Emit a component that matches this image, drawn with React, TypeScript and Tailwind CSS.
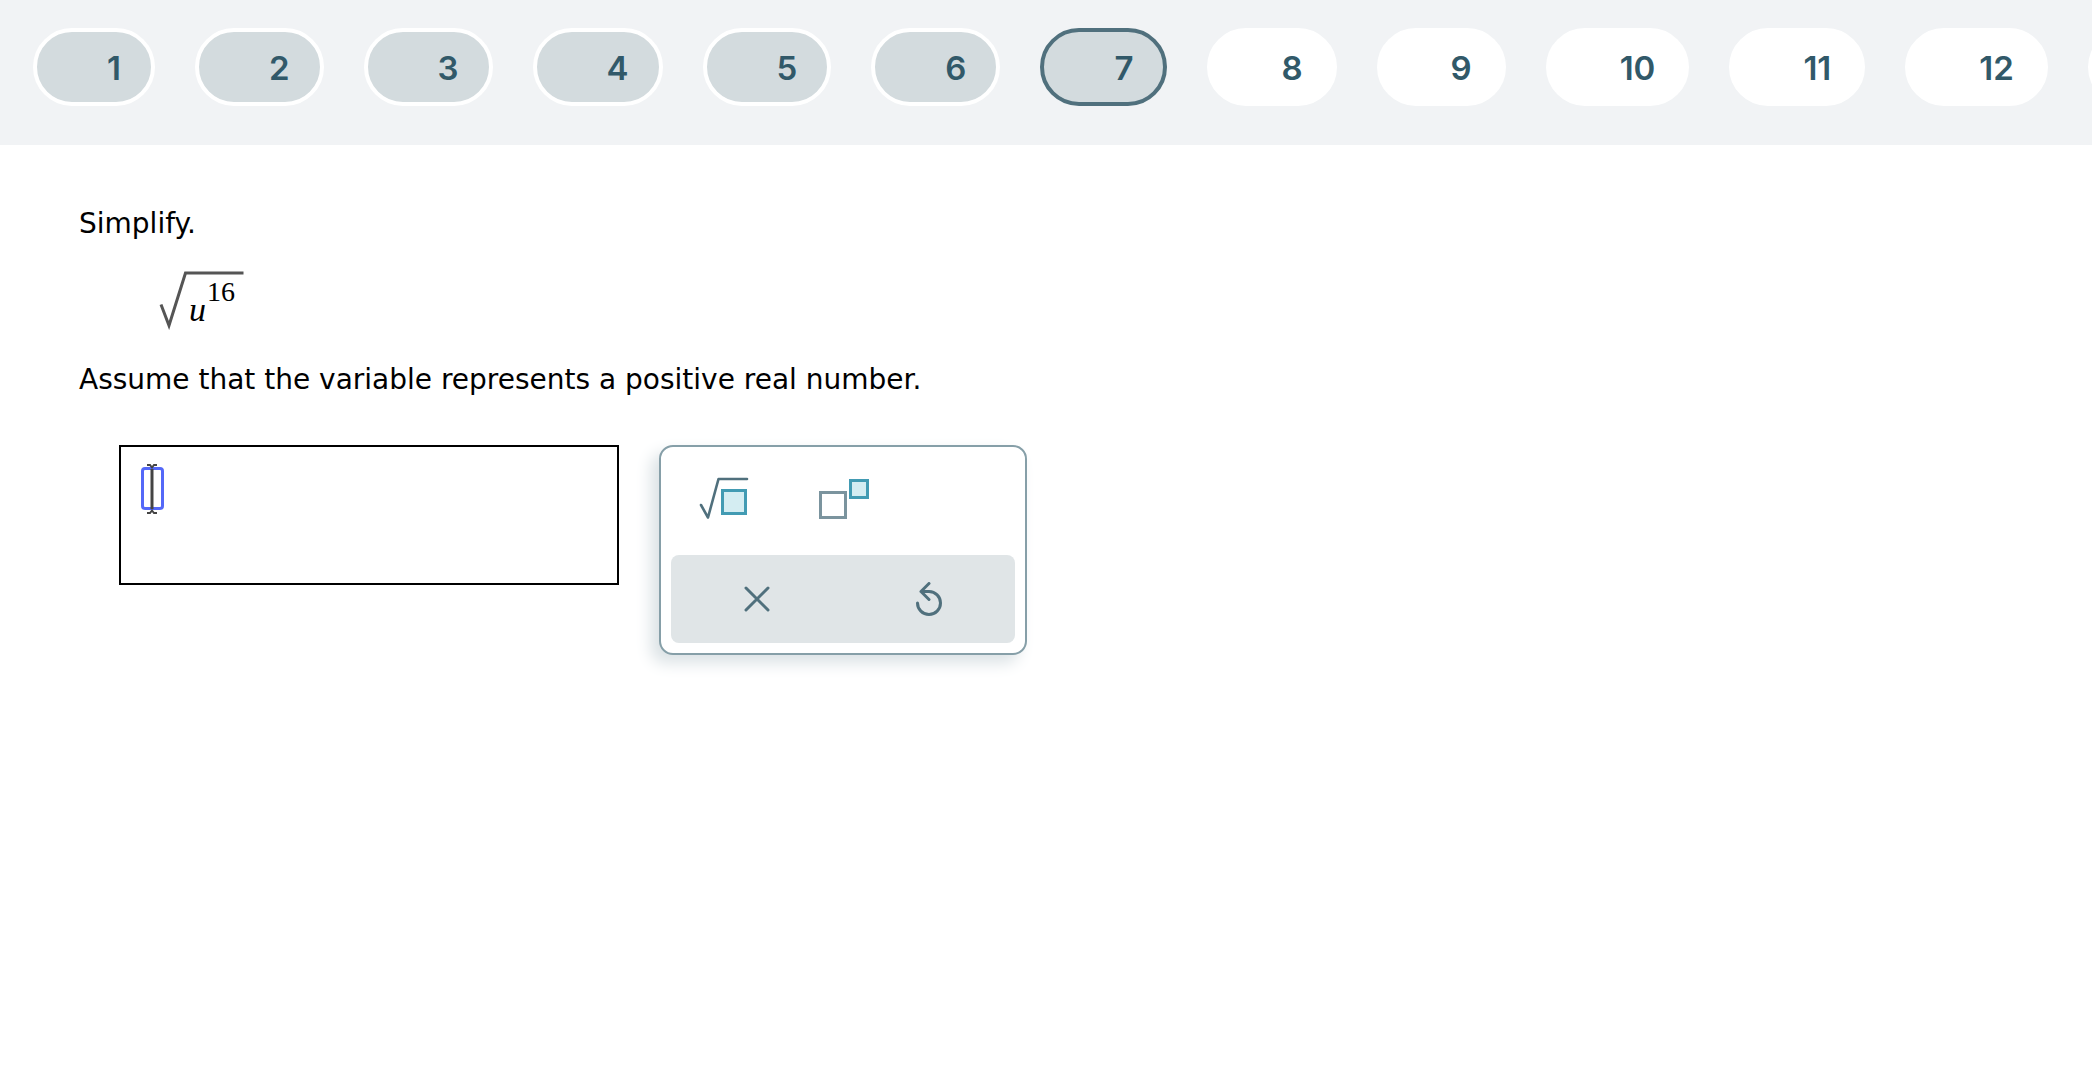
import { useState } from "react";

const questions = [
  { id: 1, answered: true },
  { id: 2, answered: true },
  { id: 3, answered: true },
  { id: 4, answered: true },
  { id: 5, answered: true },
  { id: 6, answered: true },
  { id: 7, answered: true },
  { id: 8, answered: false },
  { id: 9, answered: false },
  { id: 10, answered: false },
  { id: 11, answered: false },
  { id: 12, answered: false },
];

function pillColors(answered: boolean, active: boolean) {
  if (active) return "border-[#50707d] bg-[#d3dbde]";
  return answered ? "border-white bg-[#d3dbde]" : "border-white bg-white";
}

function QuestionNav({ current, onSelect }: { current: number; onSelect: (id: number) => void }) {
  return (
    <nav
      aria-label="Questions"
      className="flex h-[145px] items-start gap-10 overflow-hidden bg-[#f1f3f5] pl-[33px] pt-7"
    >
      {questions.map((q) => (
        <button
          key={q.id}
          type="button"
          onClick={() => onSelect(q.id)}
          aria-current={q.id === current ? "step" : undefined}
          className={`h-[78px] shrink-0 rounded-full border-4 pl-[70px] pr-[30px] pt-1 font-['Inter',sans-serif] text-[33px] font-semibold text-[#315969] ${pillColors(q.answered, q.id === current)}`}
        >
          {q.id}
        </button>
      ))}
      {/* more questions past the right edge */}
      <button type="button" aria-label="More" className="h-[78px] w-36 shrink-0 rounded-full bg-white" />
    </nav>
  );
}

function Expression() {
  return (
    <div
      role="math"
      aria-label="square root of u to the power 16"
      className="relative ml-20 mt-7 h-[60px] w-[86px] font-['Liberation_Serif',serif]"
    >
      <svg viewBox="0 0 86 60" className="h-full w-full" fill="none" stroke="#555" aria-hidden>
        <path d="M2 34.500 L10 55.500 L26.500 3 H84.500" strokeWidth="3" />
      </svg>
      <span className="absolute left-[30px] top-[20px] text-[34px] leading-[40px] italic">u</span>
      <sup className="absolute left-12 top-1.5 text-[28px] leading-8">16</sup>
    </div>
  );
}

function AnswerBox() {
  return (
    <div className="h-[140px] w-[500px] border-2 border-black p-5">
      <div className="relative h-[43px] w-[23px]">
        <input
          type="text"
          aria-label="Answer"
          className="block h-full w-full rounded-sm border-3 border-[#5468f8] outline-none"
        />
        <svg
          viewBox="0 0 12 52"
          className="pointer-events-none absolute -top-1 left-[5px] h-[52px] w-3"
          fill="none"
          stroke="#444"
          aria-hidden
        >
          <path d="M6 6 V46" strokeWidth="3" />
          <path d="M1 2 H4 L6 4.500 L8 2 H11 M1 50 H4 L6 47.500 L8 50 H11" strokeWidth="2" />
        </svg>
      </div>
    </div>
  );
}

function Palette() {
  return (
    <div className="w-[368px] rounded-[14px] border-2 border-[#869fa8] bg-white p-2.5 shadow-[-8px_8px_16px_#dbe2e5]">
      <div className="flex h-[98px] gap-[70px] pl-7 pt-5">
        <button type="button" aria-label="Square root" className="h-11 w-[50px]">
          <svg viewBox="0 0 50 44" className="h-full w-full" fill="none" aria-hidden>
            <path
              d="M2 28 L9 40.500 L19.500 2 H48"
              stroke="#50707d"
              strokeWidth="2.600"
              strokeLinecap="round"
              strokeLinejoin="round"
            />
            <rect x="23.500" y="13.500" width="23" height="23" fill="#d4edf2" stroke="#429bb3" strokeWidth="3" />
          </svg>
        </button>
        <button type="button" aria-label="Exponent" className="h-11 w-[50px]">
          <svg viewBox="0 0 50 44" className="h-full w-full" fill="none" aria-hidden>
            <rect x="1.500" y="15.500" width="25" height="25" stroke="#7b949e" strokeWidth="3" />
            <rect x="31.500" y="3.500" width="17" height="17" fill="#d4edf2" stroke="#429bb3" strokeWidth="3" />
          </svg>
        </button>
      </div>
      <div className="flex h-[88px] rounded-lg bg-[#e0e5e7]">
        <button type="button" aria-label="Clear" className="flex flex-1 items-center justify-center">
          <svg viewBox="0 0 26 26" className="h-[26px] w-[26px]" stroke="#50707d" strokeWidth="3" strokeLinecap="round" aria-hidden>
            <path d="M2 2 L24 24 M24 2 L2 24" />
          </svg>
        </button>
        <button type="button" aria-label="Undo" className="flex flex-1 items-center justify-center">
          <svg viewBox="0 0 26 34" className="h-[34px] w-[26px]" fill="none" stroke="#50707d" strokeWidth="3" strokeLinecap="round" strokeLinejoin="round" aria-hidden>
            <path d="M1.500 21 A11.500 11.500 0 1 0 13 9.500 H5 M13 1.500 L5 9.500 L13 17.500" />
          </svg>
        </button>
      </div>
    </div>
  );
}

export default function App() {
  const [current, setCurrent] = useState(7);

  return (
    <div className="min-h-screen bg-white text-black">
      <QuestionNav current={current} onSelect={setCurrent} />
      <main className="px-[79px] pt-[61px] font-['Verdana','DejaVu_Sans',sans-serif] text-[28px] leading-9">
        <p>Simplify.</p>
        <Expression />
        <p className="mt-8">Assume that the variable represents a positive real number.</p>
        <div className="ml-10 mt-[47px] flex items-start gap-10">
          <AnswerBox />
          <Palette />
        </div>
      </main>
    </div>
  );
}
